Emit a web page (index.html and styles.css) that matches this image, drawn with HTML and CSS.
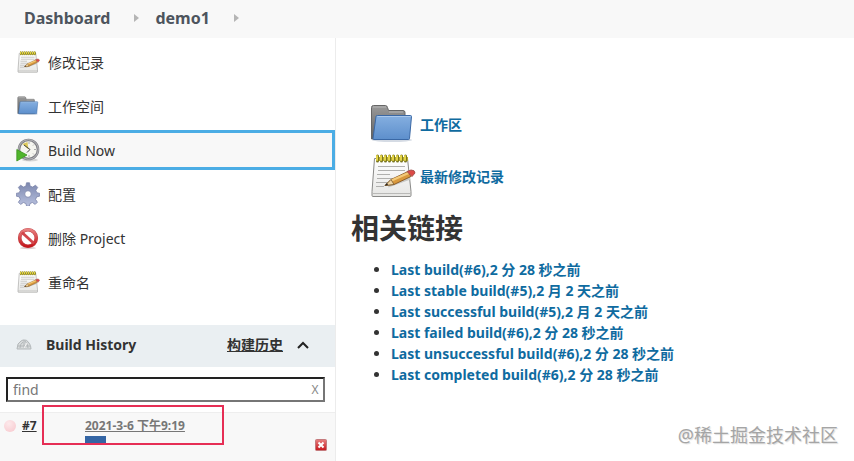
FILE: index.html
```html
<!DOCTYPE html>
<html lang="zh-CN">

<head>
    <meta charset="UTF-8">
    <meta name="viewport" content="width=device-width, initial-scale=1.0">
    <title>demo1 [Jenkins]</title>
    <link rel="stylesheet" href="styles.css">
</head>

<body>
    <svg class="defs" aria-hidden="true">
        <defs>
            <linearGradient id="blue" x1="0" y1="0" x2="0" y2="1">
                <stop offset="0" stop-color="#85afe0" />
                <stop offset="1" stop-color="#5d8fcc" />
            </linearGradient>
            <linearGradient id="gray" x1="0" y1="0" x2="0" y2="1">
                <stop offset="0" stop-color="#9a9a9a" />
                <stop offset="1" stop-color="#606060" />
            </linearGradient>
            <linearGradient id="paper" x1="0" y1="0" x2="0" y2="1">
                <stop offset="0" stop-color="#ffffff" />
                <stop offset="1" stop-color="#e6e6e4" />
            </linearGradient>
            <linearGradient id="red" x1="0" y1="0" x2="0" y2="1">
                <stop offset="0" stop-color="#e88080" />
                <stop offset="1" stop-color="#c5161c" />
            </linearGradient>
            <linearGradient id="steel" x1="0" y1="0" x2="0" y2="1">
                <stop offset="0" stop-color="#7c87ae" />
                <stop offset="1" stop-color="#b9c2df" />
            </linearGradient>
            <radialGradient id="pink" cx="0.4" cy="0.3" r="0.8">
                <stop offset="0" stop-color="#fde9eb" />
                <stop offset="1" stop-color="#f8cbd0" />
            </radialGradient>
        </defs>
        <symbol id="folder" viewBox="0 0 48 48">
            <ellipse cx="24" cy="40" rx="20" ry="2" fill="#d5dbe4" />
            <path d="M3.500 39V7.500q0-2 2-2h12q1.500 0 2 2l1 3h14.500q2 0 2 2V39z" fill="url(#gray)" stroke="#666" />
            <path d="M5 7h13M21 12h14" stroke="#b5b5b5" />
            <path d="M9.500 15.500h33q1 0 1 1l-2 22q0 1-1 1H6q-1 0-1-1l3-22q0-1 1.500-1z" fill="url(#blue)" stroke="#3a68a5" />
            <path d="M9.500 16.500h33" stroke="#a9c8ec" />
        </symbol>
        <symbol id="notepad" viewBox="0 0 48 48">
            <path d="M6.500 6.500h33l3.500 33v4q0 1-1 1h-37q-1 0-1-1v-4z" fill="url(#paper)" stroke="#8a8a88" />
            <path d="M4.500 41.500h38" stroke="#b9b9b7" />
            <path d="M8 5h32v4H8z" fill="#b3a72b" />
            <path d="M9.500 4v5M13.500 4v5M17.500 4v5M21.500 4v5M25.500 4v5M29.500 4v5M33.500 4v5M37.500 4v5" stroke="#7a761f" stroke-width="3" stroke-linecap="round" />
            <path d="M9 4v4M13 4v4M17 4v4M21 4v4M25 4v4M29 4v4M33 4v4M37 4v4" stroke="#e3d345" stroke-width="2" stroke-linecap="round" />
            <path d="M10 14.500h27M10 18.500h27M9 22.500h13M9 26.500h18M8 30.500h12M8 34.500h8" stroke="#b0b0ae" stroke-width="1.200" />
            <path d="M20 34l22-8" stroke="#c8c8c5" stroke-width="3" />
            <path d="M17 33.500l6-6 17-8 3 5-17 8z" fill="#d9993d" stroke="#7b4a16" stroke-width=".8" />
            <path d="M23 27.500l17-7.500 1 2-17 7.500z" fill="#f3c978" />
            <path d="M17 33.500l6-6 3 5z" fill="#efd4a2" stroke="#7b5a2d" stroke-width=".8" />
            <path d="M17 33.500l2-2.500 1 2z" fill="#222" />
            <path d="M39 19.500l4-1.500q4 0 4 3l-3 3.500z" fill="#dc4a46" stroke="#a8524e" />
        </symbol>
        <symbol id="clock" viewBox="0 0 24 24">
            <ellipse cx="14" cy="22" rx="8" ry="1.500" fill="#d5d5d5" />
            <circle cx="12.500" cy="11.500" r="9.500" fill="#f5f5ef" stroke="#808086" stroke-width="2.600" />
            <circle cx="12.500" cy="11.500" r="9.800" fill="none" stroke="#b8b8bb" />
            <path d="M12.500 11.500L6.500 6l5-2z" fill="#dcc95a" />
            <path d="M13 4v2M20 11.500h-2M13 19v-2M18 6.500l-1 1M18 16.500l-1-1" stroke="#aaa" />
            <path d="M8 7l6 4.500-3 3" fill="none" stroke="#444" />
            <path d="M.8 11.500L11 17 .8 23z" fill="#50b52c" stroke="#3c9420" stroke-width=".8" />
        </symbol>
        <symbol id="gear" viewBox="0 0 24 24">
            <g fill="url(#steel)" stroke="#7b84aa" stroke-width=".8">
                <path d="M10.500.8h3l.6 3.300 2.500 1 2.900-1.900 2.200 2.200-1.900 2.900 1 2.400 3 .7v2.700l-3.200.8-1 2.500 1.800 2.800-2.200 2.200-2.800-1.900-2.400 1-.7 2.700h-2.700l-.7-2.700-2.500-1-2.800 1.900-2.200-2.200 1.900-2.800-1-2.500-3.100-.8v-2.700l3.100-.7 1-2.400-1.900-2.900 2.200-2.200L7.500 5.100l2.400-1z" />
                <circle cx="12" cy="12" r="3.300" fill="#fff" />
            </g>
        </symbol>
        <symbol id="forbidden" viewBox="0 0 24 24">
            <ellipse cx="12" cy="22" rx="8" ry="1.200" fill="#dcc" />
            <circle cx="12" cy="12" r="8.300" fill="#fff" stroke="#c04a4d" stroke-width="3.600" />
            <circle cx="12" cy="12" r="8.300" fill="none" stroke="url(#red)" stroke-width="2.800" />
            <path d="M6 6.500l12 11" stroke="#d2454a" stroke-width="2.800" />
        </symbol>
        <symbol id="gauge" viewBox="0 0 16 16">
            <path d="M1 12q0-6 4-8l2-1q4-1 6 3 2 2 2 6z" fill="#d8dbdc" stroke="#b3b8ba" />
            <path d="M4 11q0-4 3-6M12 11q0-4-3-7M2 9h12M8 11V3" fill="none" stroke="#b2b7b9" />
            <path d="M8 11l3-5" stroke="#f5f5f5" />
        </symbol>
    </svg>

    <nav class="breadcrumbs">
        <a href="#">Dashboard</a>
        <span class="arrow"></span>
        <a href="#">demo1</a>
        <span class="arrow"></span>
    </nav>

    <div class="page">
        <aside class="side">
            <nav class="tasks">
                <a class="task" href="#"><svg class="icon"><use href="#notepad" /></svg>修改记录</a>
                <a class="task" href="#"><svg class="icon"><use href="#folder" /></svg>工作空间</a>
                <a class="task active" href="#"><svg class="icon"><use href="#clock" /></svg>Build Now</a>
                <a class="task" href="#"><svg class="icon"><use href="#gear" /></svg>配置</a>
                <a class="task" href="#"><svg class="icon"><use href="#forbidden" /></svg>删除 Project</a>
                <a class="task" href="#"><svg class="icon"><use href="#notepad" /></svg>重命名</a>
            </nav>

            <section class="history">
                <div class="history-head">
                    <svg class="gauge"><use href="#gauge" /></svg>
                    <h2>Build History</h2>
                    <a href="#">构建历史</a>
                    <button class="collapse" aria-label="collapse">
                        <svg width="14" height="10" viewBox="0 0 14 10"><path d="M2 8l5-5 5 5" fill="none" stroke="#222" stroke-width="2" /></svg>
                    </button>
                </div>
                <div class="search">
                    <input type="text" placeholder="find" aria-label="find">
                    <button class="clear">X</button>
                </div>
                <div class="build">
                    <svg class="ball" viewBox="0 0 14 14"><circle cx="7" cy="7" r="6" fill="url(#pink)" /></svg>
                    <a class="number" href="#">#7</a>
                    <div class="detail">
                        <a href="#">2021-3-6 下午9:19</a>
                        <div class="progress"></div>
                    </div>
                    <button class="stop" aria-label="stop">
                        <svg width="12" height="12" viewBox="0 0 12 12">
                            <rect x=".5" y=".5" width="11" height="11" rx="1" fill="url(#red)" stroke="#c47a7d" />
                            <path d="M3.500 3.500l5 5M8.500 3.500l-5 5" stroke="#fff" stroke-width="2" />
                        </svg>
                    </button>
                    <div class="highlight"></div>
                </div>
            </section>
        </aside>

        <main class="main">
            <div class="shortcuts">
                <a href="#"><svg class="icon-large"><use href="#folder" /></svg>工作区</a>
                <a href="#"><svg class="icon-large"><use href="#notepad" /></svg>最新修改记录</a>
            </div>
            <h1>相关链接</h1>
            <ul class="links">
                <li><a href="#">Last build(#6),2 分 28 秒之前</a></li>
                <li><a href="#">Last stable build(#5),2 月 2 天之前</a></li>
                <li><a href="#">Last successful build(#5),2 月 2 天之前</a></li>
                <li><a href="#">Last failed build(#6),2 分 28 秒之前</a></li>
                <li><a href="#">Last unsuccessful build(#6),2 分 28 秒之前</a></li>
                <li><a href="#">Last completed build(#6),2 分 28 秒之前</a></li>
            </ul>
        </main>
    </div>
    <div class="watermark">@稀土掘金技术社区</div>
</body>

</html>
```
FILE: styles.css
```css
* {
    margin: 0;
    padding: 0;
    box-sizing: border-box;
}

body {
    position: relative;
    display: flex;
    flex-direction: column;
    min-height: 100vh;
    font-family: "Noto Sans", "Noto Sans CJK SC", sans-serif;
    font-size: 14px;
    line-height: 21px;
    color: #333;
    background-color: #fff;
}

a {
    color: #333;
    text-decoration: none;
}

button {
    border: none;
    background: none;
    cursor: pointer;
}

svg {
    display: block;
    flex-shrink: 0;
}

.defs {
    position: absolute;
    width: 0;
    height: 0;
}

.breadcrumbs {
    display: flex;
    align-items: center;
    gap: 24px;
    height: 38px;
    padding: 0 24px 2px;
    background-color: #f8f8f8;
}

.breadcrumbs a {
    font-size: 16px;
    font-weight: bold;
    color: #4d545d;
}

.arrow {
    margin-right: -12px;
    border: 4px solid transparent;
    border-left: 5px solid #b5b5b5;
}

.page {
    flex: 1;
    display: flex;
}

.side {
    flex: 0 0 336px;
    display: flex;
    flex-direction: column;
    border-right: 1px solid #ececec;
}

.tasks {
    display: flex;
    flex-direction: column;
    gap: 4px;
    padding: 4px 0 23px;
}

.task {
    display: flex;
    align-items: center;
    gap: 8px;
    height: 40px;
    padding: 0 16px;
}

.task.active {
    border: 3px solid #4bade5;
    border-left: none;
    background-color: #f8f8f8;
}

.icon {
    width: 24px;
    height: 24px;
}

.history {
    flex: 1;
    display: flex;
    flex-direction: column;
}

.history-head {
    display: flex;
    align-items: center;
    height: 42px;
    padding: 0 25px 3px 16px;
    background-color: #eaeff2;
}

.gauge {
    width: 16px;
    height: 16px;
    margin-right: 14px;
}

.history-head h2 {
    flex: 1;
    font-size: 14px;
}

.history-head a {
    font-weight: bold;
    text-decoration: underline;
}

.collapse {
    margin-left: 13px;
}

.search {
    position: relative;
    padding: 10px;
    padding-left: 6px;
}

.search input {
    display: block;
    width: 100%;
    height: 25px;
    padding: 0 24px 0 5px;
    border: 2px solid #767676;
    border-top-color: #222;
    border-left-color: #222;
    font: inherit;
    outline: none;
}

.search input::placeholder {
    color: #777;
}

.clear {
    position: absolute;
    top: 10px;
    right: 12px;
    width: 16px;
    height: 25px;
    font: 12px "Noto Sans", sans-serif;
    color: #888;
}

.build {
    position: relative;
    flex: 1;
    display: flex;
    align-items: flex-start;
    padding: 3px 8px 8px 3px;
    border-top: 1px solid #eee;
    background-color: #f8f8f8;
    font-size: 12px;
    line-height: 20px;
    font-weight: bold;
}

.build a {
    text-decoration: underline;
}

.ball {
    width: 14px;
    height: 14px;
    margin: 3px 5px 0 0;
}

.number {
    width: 63px;
}

.detail {
    flex: 1;
}

.detail a {
    display: block;
    color: #777;
}

.progress {
    width: 21px;
    height: 8px;
    background-color: #3465a4;
}

.stop {
    margin-top: 23px;
}

.highlight {
    position: absolute;
    top: -8px;
    left: 42px;
    width: 182px;
    height: 40px;
    border: 2px solid #e62e55;
    pointer-events: none;
}

.main {
    flex: 1;
    padding: 62px 15px 0;
}

.shortcuts {
    display: flex;
    flex-direction: column;
    gap: 4px;
    padding-left: 17px;
}

.shortcuts a {
    display: flex;
    align-items: center;
    gap: 4px;
    font-weight: bold;
    color: #0f6ba0;
}

.icon-large {
    width: 48px;
    height: 48px;
}

h1 {
    padding: 7px 0 10px;
    font-size: 28px;
    line-height: 42px;
}

.links {
    padding-left: 40px;
}

.links a {
    font-weight: bold;
    color: #0f6ba0;
}

.watermark {
    position: absolute;
    right: 16px;
    bottom: 14px;
    font-size: 18px;
    line-height: 24px;
    color: #a5a5a5;
    text-shadow: 1px 1px 1px #ddd;
}
```
